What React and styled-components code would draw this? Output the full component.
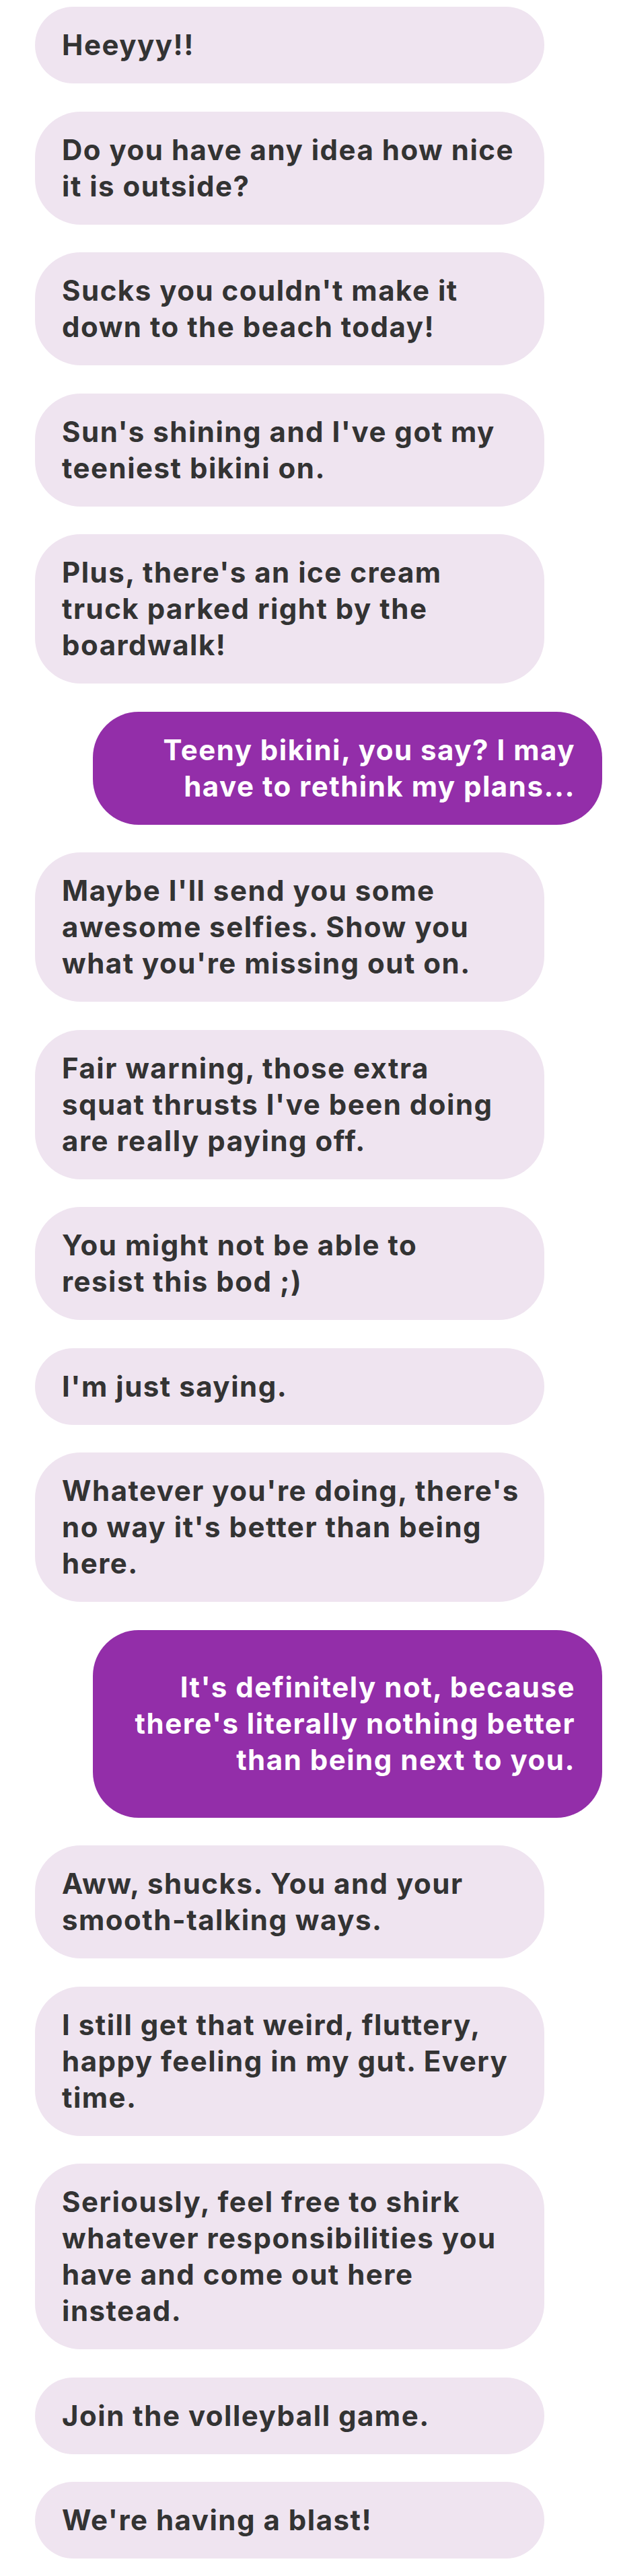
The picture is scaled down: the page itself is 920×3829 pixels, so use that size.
import styled, { createGlobalStyle } from 'styled-components'

const GlobalStyle = createGlobalStyle`
  body{
    margin:0;
    background:#ffffff;
  }
`

// each message keeps its line breaks as they show in the thread
const messages = [
  { lines: ['Heeyyy!!'] },
  { lines: ['Do you have any idea how nice', 'it is outside?'] },
  { lines: ["Sucks you couldn't make it", 'down to the beach today!'] },
  { lines: ["Sun's shining and I've got my", 'teeniest bikini on.'] },
  { lines: ["Plus, there's an ice cream", 'truck parked right by the', 'boardwalk!'] },
  { lines: ['Teeny bikini, you say? I may', 'have to rethink my plans...'], mine: true },
  { lines: ["Maybe I'll send you some", 'awesome selfies. Show you', "what you're missing out on."] },
  { lines: ['Fair warning, those extra', "squat thrusts I've been doing", 'are really paying off.'] },
  { lines: ['You might not be able to', 'resist this bod ;)'] },
  { lines: ["I'm just saying."] },
  { lines: ["Whatever you're doing, there's", "no way it's better than being", 'here.'] },
  { lines: ["It's definitely not, because", "there's literally nothing better", 'than being next to you.'], mine: true, roomy: true },
  { lines: ['Aww, shucks. You and your', 'smooth-talking ways.'] },
  { lines: ['I still get that weird, fluttery,', 'happy feeling in my gut. Every', 'time.'] },
  { lines: ['Seriously, feel free to shirk', 'whatever responsibilities you', 'have and come out here', 'instead.'] },
  { lines: ['Join the volleyball game.'] },
  { lines: ["We're having a blast!"] },
]

const App = ()=>{
  return(
    <>
      <GlobalStyle />
      <ChatStyle>
        {messages.map((m, i) => (
          <BubbleStyle key={i} $mine={m.mine} $roomy={m.roomy}>
            {m.lines.map((line, j) => <LineStyle key={j}>{line}</LineStyle>)}
          </BubbleStyle>
        ))}
      </ChatStyle>
    </>
  )
}

const ChatStyle = styled.div`
  display:flex;
  flex-direction:column;
  gap:41.5px;
  padding:10px 25px 23px 52px;
`

const BubbleStyle = styled.div`
  box-sizing:border-box;
  width:757px;
  align-self:${p => p.$mine ? 'flex-end' : 'flex-start'};
  padding:${p => p.$roomy ? '58.5px' : '30px'} 40px;
  border-radius:68px;
  background:${p => p.$mine ? '#932ea9' : '#efe4f0'};
  color:${p => p.$mine ? '#ffffff' : '#333333'};
  text-align:${p => p.$mine ? 'right' : 'left'};
  font-family:Inter, "Open Sans", sans-serif;
  font-weight:700;
  font-size:42px;
  line-height:54px;
  letter-spacing:1.5px;
`

const LineStyle = styled.span`
  display:block;
  white-space:nowrap;
`

export default App
